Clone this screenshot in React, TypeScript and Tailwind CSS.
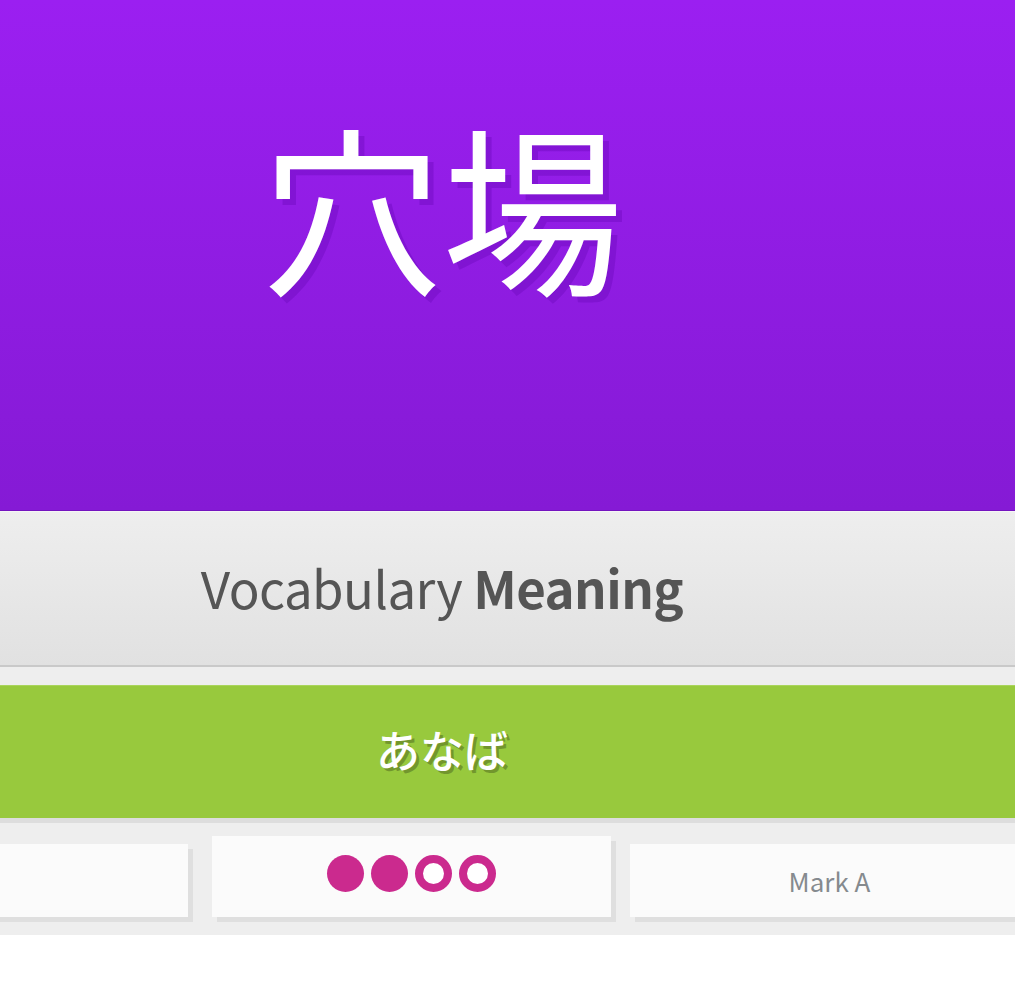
const FONT = "font-['Noto_Sans_CJK_JP','Noto_Sans',sans-serif]";

function Dots({ filled, total }: { filled: number; total: number }) {
  return (
    <div className="flex items-center gap-[7px]">
      {Array.from({ length: total }).map((_, i) =>
        i < filled ? (
          <span key={i} className="block h-[37px] w-[37px] rounded-full bg-[#cb2a8e]" />
        ) : (
          <span key={i} className="block h-[37px] w-[37px] rounded-full border-[8px] border-[#cb2a8e] bg-white" />
        )
      )}
    </div>
  );
}

export default function App() {
  return (
    <div className={`min-h-[984px] bg-white ${FONT}`}>
      {/* Character */}
      <div className="h-[511px] border-b border-[#7414bf] bg-gradient-to-b from-[#9b1ff1] to-[#851ad5]">
        <div className="w-[884px] pt-[95px] text-center">
          <span className="text-[181px] leading-[1.2] text-white [text-shadow:6px_6px_0_rgba(110,10,190,0.45)]">
            穴場
          </span>
        </div>
      </div>

      {/* Question type */}
      <div className="flex h-[156px] items-center border-t border-[#f5f5f5] border-b-2 border-b-[#c9c9c9] bg-gradient-to-b from-[#eeeeee] to-[#e1e1e1]">
        <div className="w-[884px] pb-[2px] text-center text-[51px] leading-none tracking-[-0.55px] text-[#555555]">
          Vocabulary <span className="font-bold">Meaning</span>
        </div>
      </div>

      {/* Answer */}
      <div className="bg-[#eeeeee] pt-[18px]">
        <div className="flex h-[133px] items-center border-t border-[#a9d45a] bg-[#98c93d] shadow-[0_5px_0_#dddddd]">
          <div className="w-[884px] pb-[6px] text-center text-[44px] font-medium leading-none text-white [text-shadow:3px_3px_0_rgba(0,0,0,0.25)]">
            あなば
          </div>
        </div>

        {/* Buttons */}
        <div className="overflow-hidden pb-[18px] pt-[18px]">
          <div className="-ml-[211px] flex items-end">
            <div className="h-[73px] w-[399px] shrink-0 bg-[#fbfbfb] shadow-[5px_5px_0_#dfdfdf]" />
            <div className="ml-[24px] flex h-[81px] w-[399px] shrink-0 items-center justify-center bg-[#fbfbfb] pb-[6px] shadow-[5px_5px_0_#dfdfdf]">
              <Dots filled={2} total={4} />
            </div>
            <div className="ml-[19px] flex h-[73px] w-[399px] shrink-0 items-center justify-center bg-[#fbfbfb] shadow-[5px_5px_0_#dfdfdf]">
              <span className="text-[26px] text-[#858a8e]">Mark A</span>
            </div>
          </div>
        </div>
      </div>
    </div>
  );
}
